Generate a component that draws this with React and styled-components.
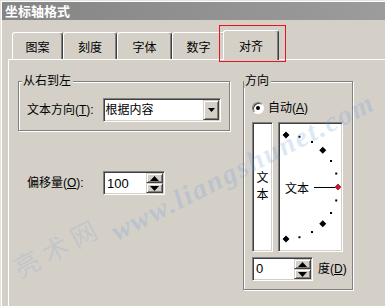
import styled, { createGlobalStyle } from "styled-components";

const GlobalStyle = createGlobalStyle`
  html, body {
    margin: 0;
    padding: 0;
    background: #d4d0c8;
  }
  body {
    font-family: "Liberation Sans", "Noto Sans CJK SC", sans-serif;
    font-size: 12px;
    color: #000;
  }
  * { box-sizing: border-box; }
`;

const tabs = [
  { id: 1, text: "图案", w: 51 },
  { id: 2, text: "刻度", w: 54 },
  { id: 3, text: "字体", w: 55 },
  { id: 4, text: "数字", w: 53 },
  { id: 5, text: "对齐", w: 56, active: true },
];

const Arrow = ({ dir = "down", w = 7, h = 4 }) => (
  <svg width={w} height={h} viewBox={`0 0 ${w} ${h}`}>
    <polygon
      points={dir === "down" ? `0,0 ${w},0 ${w / 2},${h}` : `0,${h} ${w},${h} ${w / 2},0`}
      fill="#000"
    />
  </svg>
);

const DialFace = () => {
  const cx = 6;
  const cy = 63;
  const r = 52;
  const marks = [];
  for (let a = 90; a >= -90; a -= 15) {
    if (a === 0) continue;
    const rad = (a * Math.PI) / 180;
    const x = cx + r * Math.cos(rad);
    const y = cy - r * Math.sin(rad);
    if (a % 45 === 0) {
      marks.push(
        <polygon
          key={a}
          points={`${x},${y - 3.5} ${x + 3.5},${y} ${x},${y + 3.5} ${x - 3.5},${y}`}
          fill="#000"
        />
      );
    } else {
      marks.push(<rect key={a} x={x - 1} y={y - 1} width="2" height="2" fill="#000" />);
    }
  }
  return (
    <svg width="61" height="126" viewBox="0 0 61 126">
      {marks}
      <text
        x="5"
        y="69"
        fontSize="12"
        fontFamily='"Noto Sans CJK SC", sans-serif'
        fill="#000"
      >
        文本
      </text>
      <line x1="34" y1="63.5" x2="55" y2="63.5" stroke="#000" strokeWidth="1" />
      <polygon points="58,60 61,63 58,66 55,63" fill="#d8102a" stroke="#7a0010" strokeWidth="0.6" />
    </svg>
  );
};

const App = () => {
  return (
    <>
      <GlobalStyle />
      <Window>
        <TitleBar>坐标轴格式</TitleBar>
        <TabRow>
          {tabs.map((tab) => (
            <Tab key={tab.id} $w={tab.w} $active={tab.active}>
              {tab.text}
            </Tab>
          ))}
        </TabRow>
        <Panel>
          <LeftColumn>
            <Group $w={212} $pad="0 8px 8px 8px">
              <Legend $offset={-5}>从右到左</Legend>
              <FieldRow $top={10}>
                <Label>
                  文本方向(<U>T</U>):
                </Label>
                <Combo>
                  <ComboText>根据内容</ComboText>
                  <DropButton>
                    <Arrow dir="down" w={7} h={4} />
                  </DropButton>
                </Combo>
              </FieldRow>
            </Group>
            <FieldRow $top={40} $indent={9}>
              <Label>
                偏移量(<U>O</U>):
              </Label>
              <Spin $w={62}>
                <SpinText>100</SpinText>
                <SpinButtons>
                  <SpinButton>
                    <Arrow dir="up" w={9} h={5} />
                  </SpinButton>
                  <SpinButton>
                    <Arrow dir="down" w={9} h={5} />
                  </SpinButton>
                </SpinButtons>
              </Spin>
            </FieldRow>
          </LeftColumn>

          <Group $w={110} $pad="0 2px 8px 8px" $left={13}>
            <Legend $offset={-8}>方向</Legend>
            <RadioRow>
              <Radio />
              <span>
                自动(<U>A</U>)
              </span>
            </RadioRow>
            <Visuals>
              <VerticalText>
                <span>文</span>
                <span>本</span>
              </VerticalText>
              <Dial>
                <DialFace />
              </Dial>
            </Visuals>
            <DegreeRow>
              <Spin $w={61}>
                <SpinText>0</SpinText>
                <SpinButtons>
                  <SpinButton>
                    <Arrow dir="up" w={9} h={5} />
                  </SpinButton>
                  <SpinButton>
                    <Arrow dir="down" w={9} h={5} />
                  </SpinButton>
                </SpinButtons>
              </Spin>
              <DegreeLabel>
                度(<U>D</U>)
              </DegreeLabel>
            </DegreeRow>
          </Group>
        </Panel>

        <Watermark $x={243} $y={167} $rot={-27} $size={28} $spacing={2} $italic>
          www.liangshunet.com
        </Watermark>
        <Watermark $x={57} $y={246} $rot={-28} $size={26} $spacing={6}>
          亮术网
        </Watermark>
      </Window>
    </>
  );
};
export default App;

const Window = styled.div`
  position: relative;
  width: 385px;
  height: 306px;
  overflow: hidden;
  padding-top: 2px;
  background: #d4d0c8;
  box-shadow: inset 1px 1px 0 #e6e3de, inset 2px 2px 0 #fff;
`;

const TitleBar = styled.div`
  height: 18px;
  margin-left: 2px;
  padding-left: 3px;
  display: flex;
  align-items: center;
  background: linear-gradient(to right, #858585, #9c9c9c);
  color: #fff;
  font-family: "Noto Sans CJK SC", sans-serif;
  font-weight: bold;
  font-size: 13px;
  line-height: 18px;
`;

const TabRow = styled.div`
  display: flex;
  align-items: flex-end;
  height: 29px;
  margin-top: 10px;
  padding-left: 12px;
`;

const Tab = styled.div`
  position: relative;
  width: ${(p) => p.$w}px;
  height: ${(p) => (p.$active ? 30 : 27)}px;
  margin: ${(p) => (p.$active ? "0 -2px -1px -2px" : "0")};
  z-index: ${(p) => (p.$active ? 1 : 0)};
  display: flex;
  align-items: center;
  justify-content: center;
  padding-top: ${(p) => (p.$active ? 2 : 3)}px;
  background: #d4d0c8;
  border-top: 1px solid #fff;
  border-left: 1px solid #fff;
  border-right: 1px solid #404040;
  border-radius: 3px 3px 0 0;
  box-shadow: inset -1px 0 0 #808080;
  font-size: 12px;
  line-height: 14px;

  /* annotation frame round the active tab */
  &::after {
    content: ${(p) => (p.$active ? '""' : "none")};
    position: absolute;
    inset: -6px -8px -2px -5px;
    border: 1px solid #e8141c;
  }
`;

const Panel = styled.div`
  display: flex;
  align-items: flex-start;
  width: 400px;
  height: 260px;
  margin-left: 8px;
  padding: 21px 0 0 9px;
  border-top: 1px solid #fff;
  border-left: 1px solid #fff;
`;

const LeftColumn = styled.div`
  display: flex;
  flex-direction: column;
`;

const Group = styled.div`
  width: ${(p) => p.$w}px;
  margin-left: ${(p) => p.$left || 0}px;
  padding: ${(p) => p.$pad};
  border: 1px solid #808080;
  box-shadow: inset 1px 1px 0 #fff, 1px 1px 0 #fff;
  display: flex;
  flex-direction: column;
`;

const Legend = styled.div`
  align-self: flex-start;
  height: 14px;
  margin: -8px 0 0 ${(p) => p.$offset}px;
  padding: 0 2px 0 1px;
  background: #d4d0c8;
  line-height: 14px;
  font-size: 12px;
`;

const FieldRow = styled.div`
  display: flex;
  align-items: center;
  margin-top: ${(p) => p.$top}px;
  padding-left: ${(p) => p.$indent || 0}px;
`;

const Label = styled.span`
  width: 76px;
  line-height: 14px;
`;

const U = styled.span`
  text-decoration: underline;
`;

const Sunken = styled.div`
  background: #fff;
  border: 1px solid;
  border-color: #808080 #fff #fff #808080;
  box-shadow: inset 1px 1px 0 #404040, inset -1px -1px 0 #d4d0c8;
`;

const Combo = styled(Sunken)`
  width: 119px;
  height: 24px;
  padding: 1px;
  display: flex;
  align-items: stretch;
`;

const ComboText = styled.span`
  flex: 1;
  padding-left: 1px;
  display: flex;
  align-items: center;
  line-height: 14px;
`;

const Raised = styled.div`
  background: #d4d0c8;
  border: 1px solid;
  border-color: #d4d0c8 #404040 #404040 #d4d0c8;
  box-shadow: inset 1px 1px 0 #fff, inset -1px -1px 0 #808080;
  display: flex;
  align-items: center;
  justify-content: center;
`;

const DropButton = styled(Raised)`
  width: 16px;
`;

const Spin = styled(Sunken)`
  flex-shrink: 0;
  width: ${(p) => p.$w}px;
  height: 24px;
  padding: 1px;
  display: flex;
  align-items: stretch;
`;

const SpinText = styled.span`
  flex: 1;
  padding-left: 2px;
  display: flex;
  align-items: center;
  font-size: 13px;
`;

const SpinButtons = styled.div`
  width: 17px;
  display: flex;
  flex-direction: column;
`;

const SpinButton = styled(Raised)`
  flex: 1;
`;

const RadioRow = styled.div`
  display: flex;
  align-items: center;
  gap: 4px;
  height: 14px;
  margin-top: 13px;
  line-height: 14px;
`;

const Radio = styled.span`
  position: relative;
  width: 12px;
  height: 12px;
  border-radius: 50%;
  background: #fff;
  border: 1px solid;
  border-color: #808080 #fff #fff #808080;
  box-shadow: inset 1px 1px 0 #404040;

  &::after {
    content: "";
    position: absolute;
    left: 3px;
    top: 3px;
    width: 4px;
    height: 4px;
    border-radius: 50%;
    background: #000;
  }
`;

const Visuals = styled.div`
  display: flex;
  gap: 5px;
  margin-top: 7px;
  height: 130px;
`;

const VerticalText = styled(Sunken)`
  width: 21px;
  display: flex;
  flex-direction: column;
  align-items: center;
  justify-content: center;
  line-height: 17px;
  font-size: 12px;
`;

const Dial = styled(Sunken)`
  width: 65px;
  padding: 1px;
  display: flex;
  overflow: hidden;
`;

const DegreeRow = styled.div`
  display: flex;
  align-items: center;
  gap: 5px;
  margin-top: 5px;
  line-height: 14px;
`;

const DegreeLabel = styled.span`
  white-space: nowrap;
`;

const Watermark = styled.div`
  position: absolute;
  left: ${(p) => p.$x}px;
  top: ${(p) => p.$y}px;
  transform: translate(-50%, -50%) rotate(${(p) => p.$rot}deg);
  white-space: nowrap;
  pointer-events: none;
  color: ${(p) => (p.$italic ? "rgba(100, 150, 220, 0.24)" : "rgba(100, 150, 220, 0.18)")};
  font-family: ${(p) => (p.$italic ? '"Liberation Serif", serif' : '"Noto Sans CJK SC", sans-serif')};
  font-style: ${(p) => (p.$italic ? "italic" : "normal")};
  font-weight: ${(p) => (p.$italic ? "bold" : "normal")};
  font-size: ${(p) => p.$size}px;
  letter-spacing: ${(p) => p.$spacing}px;
`;
